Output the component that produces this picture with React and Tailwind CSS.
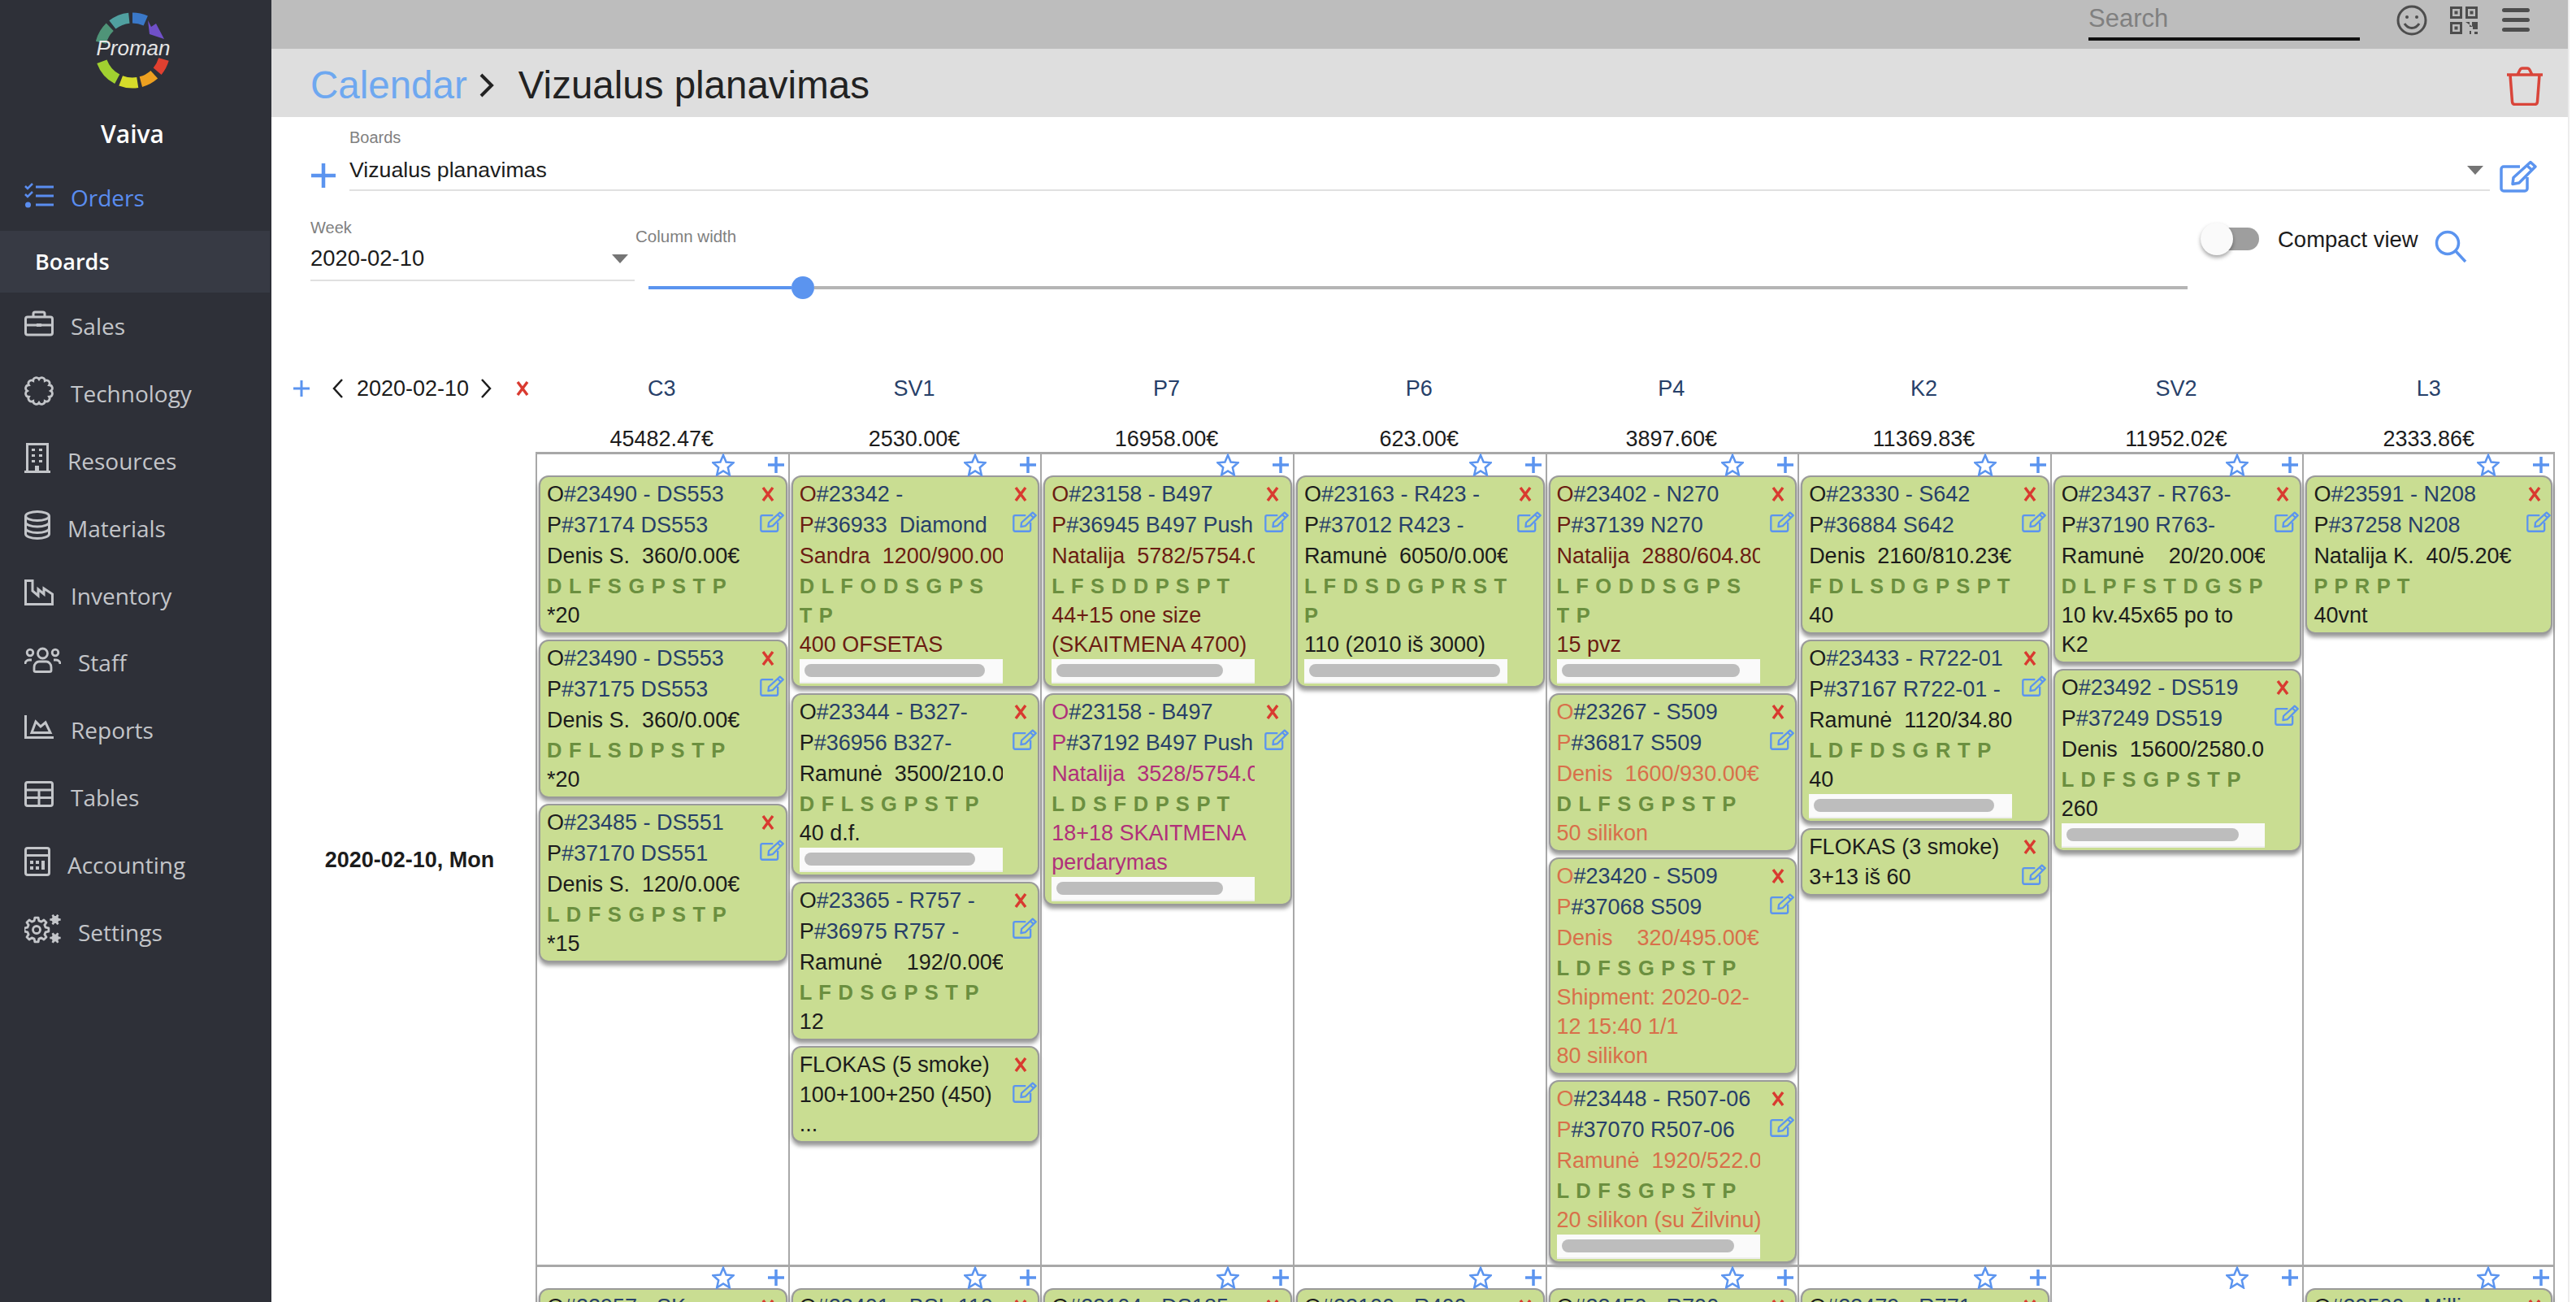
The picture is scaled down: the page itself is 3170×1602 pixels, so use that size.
import React from "react";

const BLUE = "#5b94ef";
const RED = "#d93a30";
const BLACK = "#1c1c1c";
const DARK = "#6b1d12";
const PINK = "#b0307a";
const ORANGE = "#d8704a";

// ---- icons ----
const arc = (r, a, b) => {
  const pt = (d) => {
    const t = ((d - 90) * Math.PI) / 180;
    return `${45 + r * Math.cos(t)} ${47 + r * Math.sin(t)}`;
  };
  return `M${pt(a)}A${r} ${r} 0 0 1 ${pt(b)}`;
};

const Logo = () => (
  <svg width="94" height="96" viewBox="0 0 94 96" fill="none">
    <path d={arc(40, -76, -44)} stroke="#4f9478" strokeWidth="13" />
    <path d={arc(40, -38, -6)} stroke="#50a0a0" strokeWidth="13" />
    <path d={arc(40, 0, 24)} stroke="#3a78c8" strokeWidth="13" />
    <path d="M64 10 L68 18 L74 14 L84 33 L66 27 Z" fill="#7050c8" />
    <path d={arc(40, 106, 130)} stroke="#e04030" strokeWidth="13" />
    <path d={arc(40, 138, 165)} stroke="#eda020" strokeWidth="13" />
    <path d={arc(40, 171, 201)} stroke="#d6dc2a" strokeWidth="13" />
    <path d={arc(40, 208, 250)} stroke="#a0d030" strokeWidth="13" />
    <text x="46" y="53" textAnchor="middle" fontSize="26" fontStyle="italic" fill="#e6e6e6" fontFamily="Liberation Sans, sans-serif">
      Proman
    </text>
  </svg>
);

const Tasks = () => (
  <svg width="36" height="32" viewBox="0 0 36 32" fill="none" stroke="currentColor" strokeWidth="3">
    <path d="M14 5H36M14 16H36M14 27H36" />
    <path d="M1 4l3 3 6-6M1 14l3 3 6-6" strokeWidth="2.5" />
    <circle cx="4.5" cy="27" r="3.5" fill="currentColor" stroke="none" />
  </svg>
);

const Briefcase = () => (
  <svg width="36" height="32" viewBox="0 0 36 32" fill="none" stroke="currentColor" strokeWidth="3">
    <rect x="1.5" y="8" width="33" height="22" rx="2.5" />
    <path d="M11 8V4a2 2 0 012-2h10a2 2 0 012 2v4M1.5 18H34.500" />
    <rect x="15" y="16" width="6" height="4" fill="currentColor" stroke="none" />
  </svg>
);

const scallop = () => {
  let d = "";
  const n = 12;
  for (let i = 0; i <= n; i++) {
    const t = (i / n) * 2 * Math.PI;
    const x = 18 + 14.5 * Math.cos(t);
    const y = 18 + 14.5 * Math.sin(t);
    d += i === 0 ? `M${x} ${y}` : `A3.900 3.900 0 0 1 ${x} ${y}`;
  }
  return d + "Z";
};

const Blob = () => (
  <svg width="36" height="36" viewBox="0 0 36 36" fill="none" stroke="currentColor" strokeWidth="2.800">
    <path d={scallop()} />
  </svg>
);

const Building = () => (
  <svg width="32" height="37" viewBox="0 0 32 37" fill="none" stroke="currentColor" strokeWidth="3">
    <path d="M3.500 35V1.500H28.500V35M0 35.500H32" />
    <path d="M9 7h4v3H9zM18 7h4v3h-4zM9 14h4v3H9zM18 14h4v3h-4zM9 21h4v3H9zM18 21h4v3h-4zM13 28h5v7h-5z" fill="currentColor" stroke="none" />
  </svg>
);

const Database = () => (
  <svg width="32" height="36" viewBox="0 0 32 36" fill="none" stroke="currentColor" strokeWidth="3">
    <ellipse cx="16" cy="7" rx="14.500" ry="5.500" />
    <path d="M1.500 7V29c0 3 6.500 5.500 14.500 5.500S30.500 32 30.500 29V7M1.500 14.500c0 3 6.500 5.500 14.500 5.500s14.500-2.500 14.500-5.500M1.500 22c0 3 6.500 5.500 14.500 5.500S30.500 25 30.500 22" />
  </svg>
);

const Industry = () => (
  <svg width="36" height="32" viewBox="0 0 36 32" fill="none" stroke="currentColor" strokeWidth="3">
    <path d="M1.500 1.500H10V14L17 20V12L24 18V11L34.500 18V30.500H1.500Z" />
  </svg>
);

const Users = () => (
  <svg width="45" height="32" viewBox="0 0 45 32" fill="none" stroke="currentColor" strokeWidth="2.800">
    <circle cx="22.500" cy="8" r="6" />
    <circle cx="7" cy="7" r="3.800" />
    <circle cx="38" cy="7" r="3.800" />
    <path d="M12 29v-4c0-4 3-7 6-7h9c3 0 6 3 6 7v4c0 1-1 1.500-2 1.500H14c-1 0-2-.5-2-1.500z" />
    <path d="M1 21c0-3 2-5 5-5h3M44 21c0-3-2-5-5-5h-3" />
  </svg>
);

const ChartArea = () => (
  <svg width="36" height="29" viewBox="0 0 36 29" fill="none" stroke="currentColor" strokeWidth="3">
    <path d="M1.500 0V27.500H36" />
    <path d="M9 21.500L14 8l6 6 6-5 6 12.500Z" />
  </svg>
);

const TableIcon = () => (
  <svg width="36" height="32" viewBox="0 0 36 32" fill="none" stroke="currentColor" strokeWidth="3">
    <rect x="1.500" y="1.500" width="33" height="29" rx="2.500" />
    <path d="M1.500 11H34.500M1.500 20.500H34.500M18 11V30" />
  </svg>
);

const Calculator = () => (
  <svg width="32" height="36" viewBox="0 0 32 36" fill="none" stroke="currentColor" strokeWidth="3">
    <rect x="1.500" y="1.500" width="29" height="33" rx="2.500" />
    <path d="M1.500 10.500H30.500" />
    <path d="M7 17h4v4H7zM14 17h4v4h-4zM7 24h4v4H7zM14 24h4v4h-4zM21 17h4v11h-4z" fill="currentColor" stroke="none" />
  </svg>
);

const gear = (cx, cy, r, R, n) => {
  let d = "";
  for (let i = 0; i < n; i++) {
    const s = (2 * Math.PI) / n;
    const t = i * s;
    const p = [
      [r, t - s * 0.32],
      [R, t - s * 0.18],
      [R, t + s * 0.18],
      [r, t + s * 0.32],
    ];
    p.forEach(([q, a], k) => {
      d += `${i === 0 && k === 0 ? "M" : "L"}${cx + q * Math.cos(a)} ${cy + q * Math.sin(a)}`;
    });
  }
  return d + "Z";
};

const Cogs = () => (
  <svg width="45" height="36" viewBox="0 0 45 36" fill="none" stroke="currentColor">
    <path d={gear(15, 19, 11.500, 15, 8)} strokeWidth="2.800" strokeLinejoin="round" />
    <circle cx="15" cy="19" r="4.500" strokeWidth="2.800" />
    <path d={gear(38, 6.500, 4.500, 6.800, 6)} fill="currentColor" stroke="none" />
    <path d={gear(38, 29, 4.500, 6.800, 6)} fill="currentColor" stroke="none" />
  </svg>
);

const Plus = ({ size = 20, w = 3.5 }) => (
  <svg width={size} height={size} viewBox="0 0 20 20" stroke={BLUE} strokeWidth={w} className="shrink-0">
    <path d="M10 0V20M0 10H20" />
  </svg>
);

const RedX = ({ size = 18 }) => (
  <svg width={size} height={size} viewBox="0 0 18 18" stroke={RED} strokeWidth="3.400" className="shrink-0">
    <path d="M3 1L15 17M15 1L3 17" />
  </svg>
);

const Edit = ({ w = 30, h = 28 }) => (
  <svg width={w} height={h} viewBox="0 0 46 40" fill="none" stroke={BLUE} strokeWidth="3.500" className="shrink-0">
    <path d="M25 8H5a3 3 0 00-3 3v24a3 3 0 003 3h26a3 3 0 003-3V21" />
    <path d="M38 2.500l6 5.500-20 20-8 1.500 1-8zM34 7l6 5.500" strokeLinejoin="round" />
  </svg>
);

const Star = () => (
  <svg width="28" height="28" viewBox="0 0 28 28" fill="none" stroke={BLUE} strokeWidth="2.500" className="shrink-0">
    <path d="M14 2l3.600 8.500 9 .8-6.800 6 2 9-7.800-4.800-7.800 4.800 2-9-6.800-6 9-.8z" />
  </svg>
);

const Arrow = () => <div className="w-0 h-0 border-x-[10px] border-x-transparent border-t-[11px] border-t-[#757575]" />;

// ---- data ----
const columns = [
  {
    name: "C3",
    total: "45482.47€",
    cards: [
      { o: "#23490 - DS553", p: "#37174 DS553", who: "Denis S.  360/0.00€", ops: ["D L F S G P S T P"], notes: ["*20"] },
      { o: "#23490 - DS553", p: "#37175 DS553", who: "Denis S.  360/0.00€", ops: ["D F L S D P S T P"], notes: ["*20"] },
      { o: "#23485 - DS551", p: "#37170 DS551", who: "Denis S.  120/0.00€", ops: ["L D F S G P S T P"], notes: ["*15"] },
    ],
    next: { o: "#22957 - SK", p: "" },
  },
  {
    name: "SV1",
    total: "2530.00€",
    cards: [
      { o: "#23342 -", p: "#36933  Diamond", who: "Sandra  1200/900.00", ops: ["D L F O D S G P S", "T P"], notes: ["400 OFSETAS"], bar: 222, tone: DARK },
      { o: "#23344 - B327-", p: "#36956 B327-", who: "Ramunė  3500/210.0", ops: ["D F L S G P S T P"], notes: ["40 d.f."], bar: 210 },
      { o: "#23365 - R757 -", p: "#36975 R757 -", who: "Ramunė    192/0.00€", ops: ["L F D S G P S T P"], notes: ["12"] },
      { plain: ["FLOKAS (5 smoke)", "100+100+250 (450)", "..."] },
    ],
    next: { o: "#23401 - BSL-110", p: "" },
  },
  {
    name: "P7",
    total: "16958.00€",
    cards: [
      { o: "#23158 - B497", p: "#36945 B497 Push", who: "Natalija  5782/5754.00", ops: ["L F S D D P S P T"], notes: ["44+15 one size", "(SKAITMENA 4700)"], bar: 205, tone: DARK },
      { o: "#23158 - B497", p: "#37192 B497 Push", who: "Natalija  3528/5754.00", ops: ["L D S F D P S P T"], notes: ["18+18 SKAITMENA", "perdarymas"], bar: 205, tone: PINK },
    ],
    next: { o: "#23104 - DS185", p: "" },
  },
  {
    name: "P6",
    total: "623.00€",
    cards: [
      { o: "#23163 - R423 -", p: "#37012 R423 -", who: "Ramunė  6050/0.00€", ops: ["L F D S D G P R S T", "P"], notes: ["110 (2010 iš 3000)"], bar: 235 },
    ],
    next: { o: "#23100 - R400", p: "" },
  },
  {
    name: "P4",
    total: "3897.60€",
    cards: [
      { o: "#23402 - N270", p: "#37139 N270", who: "Natalija  2880/604.80", ops: ["L F O D D S G P S", "T P"], notes: ["15 pvz"], bar: 219, tone: DARK },
      { o: "#23267 - S509", p: "#36817 S509", who: "Denis  1600/930.00€", ops: ["D L F S G P S T P"], notes: ["50 silikon"], tone: ORANGE },
      { o: "#23420 - S509", p: "#37068 S509", who: "Denis    320/495.00€", ops: ["L D F S G P S T P"], notes: ["Shipment: 2020-02-", "12 15:40 1/1", "80 silikon"], tone: ORANGE },
      { o: "#23448 - R507-06", p: "#37070 R507-06", who: "Ramunė  1920/522.0", ops: ["L D F S G P S T P"], notes: ["20 silikon (su Žilvinu)"], bar: 212, tone: ORANGE },
    ],
    next: { o: "#23450 - R700", p: "" },
  },
  {
    name: "K2",
    total: "11369.83€",
    cards: [
      { o: "#23330 - S642", p: "#36884 S642", who: "Denis  2160/810.23€", ops: ["F D L S D G P S P T"], notes: ["40"] },
      { o: "#23433 - R722-01", p: "#37167 R722-01 -", who: "Ramunė  1120/34.80", ops: ["L D F D S G R T P"], notes: ["40"], bar: 222 },
      { plain: ["FLOKAS (3 smoke)", "3+13 iš 60"] },
    ],
    next: { o: "#23479 - R771", p: "" },
  },
  {
    name: "SV2",
    total: "11952.02€",
    cards: [
      { o: "#23437 - R763-", p: "#37190 R763-", who: "Ramunė    20/20.00€", ops: ["D L P F S T D G S P"], notes: ["10 kv.45x65 po to", "K2"] },
      { o: "#23492 - DS519", p: "#37249 DS519", who: "Denis  15600/2580.0", ops: ["L D F S G P S T P"], notes: ["260"], bar: 212 },
    ],
    next: null,
  },
  {
    name: "L3",
    total: "2333.86€",
    cards: [
      { o: "#23591 - N208", p: "#37258 N208", who: "Natalija K.  40/5.20€", ops: ["P P R P T"], notes: ["40vnt"] },
    ],
    next: { o: "#23500 - Milli", p: "" },
  },
];

const navItems = [
  { label: "Sales", Icon: Briefcase },
  { label: "Technology", Icon: Blob },
  { label: "Resources", Icon: Building },
  { label: "Materials", Icon: Database },
  { label: "Inventory", Icon: Industry },
  { label: "Staff", Icon: Users },
  { label: "Reports", Icon: ChartArea },
  { label: "Tables", Icon: TableIcon },
  { label: "Accounting", Icon: Calculator },
  { label: "Settings", Icon: Cogs },
];

// ---- parts ----
const Sidebar = () => (
  <aside className="w-[334px] shrink-0 h-full bg-[#2e3038] font-['Open_Sans',sans-serif] text-[28px] text-[#c3c5c9]">
    <div className="h-[140px] pt-[15px] pl-[118px]">
      <Logo />
    </div>
    <div className="h-[61px] pr-[8px] flex items-start justify-center text-[30px] font-semibold text-white leading-[50px]">Vaiva</div>
    <div className="h-[83px] flex items-center pl-[30px] text-[#5a8df0]">
      <div className="-mt-[4px]">
        <Tasks />
      </div>
      <span className="ml-[21px]">Orders</span>
    </div>
    <div className="h-[76px] w-[332px] bg-[#373a44] flex items-center pl-[43px] text-[27px] font-semibold text-white">Boards</div>
    {navItems.map(({ label, Icon }) => (
      <div key={label} className="h-[82.8px] flex items-center pl-[30px]">
        <div className="-mt-[7px]">
          <Icon />
        </div>
        <span className="ml-[21px]">{label}</span>
      </div>
    ))}
  </aside>
);

const TopBar = () => (
  <div className="h-[60px] shrink-0 bg-[#bdbdbd] flex items-start justify-end pr-[47px] text-[#4d4d4d]">
    <div className="w-[334px] h-[50px] border-b-4 border-[#111] text-[31px] leading-[46px] text-[#808080]">Search</div>
    <svg width="38" height="38" viewBox="0 0 38 38" fill="none" stroke="currentColor" strokeWidth="3" className="ml-[45px] mt-[6px]">
      <circle cx="19" cy="19" r="17" />
      <circle cx="13" cy="15" r="2" fill="currentColor" stroke="none" />
      <circle cx="25" cy="15" r="2" fill="currentColor" stroke="none" />
      <path d="M10 23c2.500 4 5.500 5.500 9 5.500s6.500-1.500 9-5.500" />
    </svg>
    <svg width="34" height="34" viewBox="0 0 34 34" fill="none" stroke="currentColor" strokeWidth="3" className="ml-[28px] mt-[8px]">
      <rect x="1.500" y="1.500" width="12" height="12" />
      <rect x="20.500" y="1.500" width="12" height="12" />
      <rect x="1.500" y="20.500" width="12" height="12" />
      <path d="M5.500 5.500h4v4h-4zM24.500 5.500h4v4h-4zM5.500 24.500h4v4h-4z" fill="currentColor" stroke="none" />
      <path d="M19 19h5v6h3v-6h7v9h-6v-3M19 22v12M24 30h2v4h-2zM30 31h4v3h-4z" fill="currentColor" stroke="none" />
    </svg>
    <div className="ml-[30px] mt-[10px] w-[34px] flex flex-col gap-[7px]">
      <div className="h-[5px] rounded-full bg-[#4d4d4d]" />
      <div className="h-[5px] rounded-full bg-[#4d4d4d]" />
      <div className="h-[5px] rounded-full bg-[#4d4d4d]" />
    </div>
  </div>
);

const Header = () => (
  <div className="h-[84px] shrink-0 bg-[#dedede] flex items-center pl-[48px] pr-[30px] pt-[5px] text-[47.500px] text-[#222]">
    <span className="text-[#6ea8f0]">Calendar</span>
    <svg width="20" height="30" viewBox="0 0 20 30" fill="none" stroke="#222" strokeWidth="4" className="ml-[14px] mr-[29px]">
      <path d="M3 2l13 13L3 28" />
    </svg>
    <span>Vizualus planavimas</span>
    <svg width="46" height="48" viewBox="0 0 46 48" fill="none" stroke="#d9453a" strokeWidth="3.500" className="ml-auto mt-[3px]">
      <path d="M1 10H45M14 10l3-6c.5-1 1.500-2 3-2h6c1.500 0 2.500 1 3 2l3 6M5 10l2.500 33c.1 2 1.500 3.500 3.500 3.500h24c2 0 3.400-1.500 3.500-3.500L41 10" />
    </svg>
  </div>
);

const Filters = () => (
  <div className="shrink-0">
    <div className="flex items-end h-[93px] pl-[49px] pr-[38px]">
      <div className="mb-[6px]">
        <Plus size={30} w={3} />
      </div>
      <div className="ml-[17px] flex-1 h-[78px] border-b-2 border-[#e0e0e0] flex flex-col mb-[2px]">
        <div className="h-[24px] text-[20px] leading-[24px] text-[#808080]">Boards</div>
        <div className="h-[36px] mt-[10px] flex items-center justify-between pr-[8px] text-[26.700px] text-[#1c1c1c]">
          <span>Vizualus planavimas</span>
          <Arrow />
        </div>
      </div>
      <div className="ml-[12px]">
        <Edit w={46} h={40} />
      </div>
    </div>
    <div className="flex items-start h-[221px] pl-[48px]">
      <div className="w-[399px] mt-[31px] h-[78px] border-b-2 border-[#e0e0e0]">
        <div className="h-[24px] text-[20px] leading-[24px] text-[#808080]">Week</div>
        <div className="h-[36px] mt-[8px] flex items-center justify-between pr-[8px] text-[27.400px] text-[#1c1c1c]">
          <span>2020-02-10</span>
          <Arrow />
        </div>
      </div>
      <div className="w-[1911px] mt-[42px]">
        <div className="h-[24px] ml-[1px] text-[20.500px] leading-[24px] text-[#808080]">Column width</div>
        <div className="flex items-center h-[28px] mt-[37px] ml-[17px]">
          <div className="w-[176px] h-[4px] bg-[#5b94ef]" />
          <div className="w-[28px] h-[28px] rounded-full bg-[#5b94ef] shrink-0" />
          <div className="flex-1 h-[4px] bg-[#b5b5b5]" />
        </div>
      </div>
      <div className="ml-[22px] mt-[43px] w-[66px] h-[28px] rounded-full bg-[#9e9e9e] flex items-center">
        <div className="w-[40px] h-[40px] rounded-full bg-[#fafafa] shrink-0 -ml-[6px] shadow-[0_3px_5px_rgba(0,0,0,0.35)]" />
      </div>
      <div className="ml-[23px] mt-[40px] text-[27.500px] leading-[36px] text-[#1c1c1c]">Compact view</div>
      <svg width="40" height="40" viewBox="0 0 40 40" fill="none" stroke={BLUE} strokeWidth="3.500" className="ml-[20px] mt-[46px]">
        <circle cx="16" cy="16" r="13.500" />
        <path d="M26 26l12 13" />
      </svg>
    </div>
  </div>
);

const Card = ({ card }) => {
  const tone = card.tone || BLACK;
  return (
    <div className="flex bg-[#c9dd92] border-2 border-[#9a9a9a] rounded-[12px] shadow-[0_4px_5px_rgba(0,0,0,0.4)] mb-[7px] pl-[8px] pt-[2px] pb-[3px]">
      <div className="w-[250px] shrink-0 overflow-hidden whitespace-pre text-[27px] leading-[36px]">
        {card.plain ? (
          card.plain.map((line, i) => (
            <div key={i} className={i === 0 ? "h-[38px] leading-[38px] text-[#1c1c1c]" : "h-[36px] text-[#1c1c1c]"}>
              {line}
            </div>
          ))
        ) : (
          <>
            <div className="h-[38px] leading-[38px] text-[#274069]">
              <span style={{ color: tone }}>O</span>
              {card.o}
            </div>
            {card.p && (
              <div className="h-[38px] leading-[38px] text-[#274069]">
                <span style={{ color: tone }}>P</span>
                {card.p}
              </div>
            )}
            {card.who && (
              <div className="h-[38px] leading-[38px]" style={{ color: tone }}>
                {card.who}
              </div>
            )}
            {card.ops &&
              card.ops.map((line, i) => (
                <div key={i} className="h-[36px] text-[25.500px] font-bold text-[#6b8f3f] [word-spacing:1.500px]">
                  {line}
                </div>
              ))}
            {card.notes &&
              card.notes.map((line, i) => (
                <div key={i} className="h-[36px]" style={{ color: tone }}>
                  {line}
                </div>
              ))}
            {card.bar && (
              <div className="h-[30px] bg-[#fafafa] border-b-2 border-[#eeeeee] flex items-center pl-[6px]">
                <div className="h-[16px] rounded-full bg-[#bdbdbd]" style={{ width: card.bar }} />
              </div>
            )}
          </>
        )}
      </div>
      <div className="flex-1 flex flex-col pl-[12px] pt-[10px]">
        <div className="ml-[1px]">
          <RedX />
        </div>
        <div className="mt-[11px]">
          <Edit />
        </div>
      </div>
    </div>
  );
};

const Cell = ({ cards, last }) => (
  <div className={`min-w-0 border-l-2 border-[#a8a8a8] pl-[2px] pr-[1px] ${last ? "border-r-2" : ""}`}>
    <div className="h-[26px] flex items-start justify-end pr-[4px] gap-[41px]">
      <div className="-mt-[1px]">
        <Star />
      </div>
      <div className="mt-[3px]">
        <Plus size={20} w={3.500} />
      </div>
    </div>
    {cards.map((card, i) => (
      <Card key={i} card={card} />
    ))}
  </div>
);

const Board = () => (
  <div className="flex-1 min-h-0">
    <div className="grid grid-cols-[325px_repeat(8,310.625px)] h-[98px]">
      <div className="flex items-start pl-[27px] text-[27px] text-[#1c1c1c]">
        <div className="flex items-center h-[40px]">
          <Plus size={20} w={3} />
          <svg width="14" height="24" viewBox="0 0 14 24" fill="none" stroke="#1c1c1c" strokeWidth="2.500" className="ml-[28px]">
            <path d="M12 1L2 12l10 11" />
          </svg>
          <span className="ml-[16px]">2020-02-10</span>
          <svg width="14" height="24" viewBox="0 0 14 24" fill="none" stroke="#1c1c1c" strokeWidth="2.500" className="ml-[14px]">
            <path d="M2 1l10 11L2 23" />
          </svg>
          <div className="ml-[29px]">
            <RedX />
          </div>
        </div>
      </div>
      {columns.map((col) => (
        <div key={col.name + col.total} className="flex flex-col items-center text-[27px]">
          <div className="h-[40px] leading-[40px] text-[#274069]">{col.name}</div>
          <div className="h-[36px] mt-[24px] leading-[36px] text-[#1c1c1c]">{col.total}</div>
        </div>
      ))}
    </div>
    <div className="grid grid-cols-[325px_repeat(8,310.625px)] h-[1000px]">
      <div className="flex items-center justify-center pl-[15px] text-[27px] font-bold text-[#1c1c1c]">2020-02-10, Mon</div>
      <div className="col-span-8 grid grid-cols-8 border-t-[3px] border-[#a8a8a8]">
        {columns.map((col, i) => (
          <Cell key={col.name + i} cards={col.cards} last={i === 7} />
        ))}
      </div>
    </div>
    <div className="grid grid-cols-[325px_repeat(8,310.625px)] h-[60px]">
      <div />
      <div className="col-span-8 grid grid-cols-8 border-t-[3px] border-[#a8a8a8]">
        {columns.map((col, i) => (
          <Cell key={col.name + i} cards={col.next ? [col.next] : []} last={i === 7} />
        ))}
      </div>
    </div>
  </div>
);

export default function App() {
  return (
    <div className="flex w-[3170px] h-[1602px] overflow-hidden bg-white font-['Liberation_Sans',Arial,sans-serif]">
      <Sidebar />
      <main className="w-[2826px] shrink-0 h-full flex flex-col overflow-hidden">
        <TopBar />
        <Header />
        <Filters />
        <Board />
      </main>
      <div className="flex-1 border-l-2 border-[#ececec]" />
    </div>
  );
}
